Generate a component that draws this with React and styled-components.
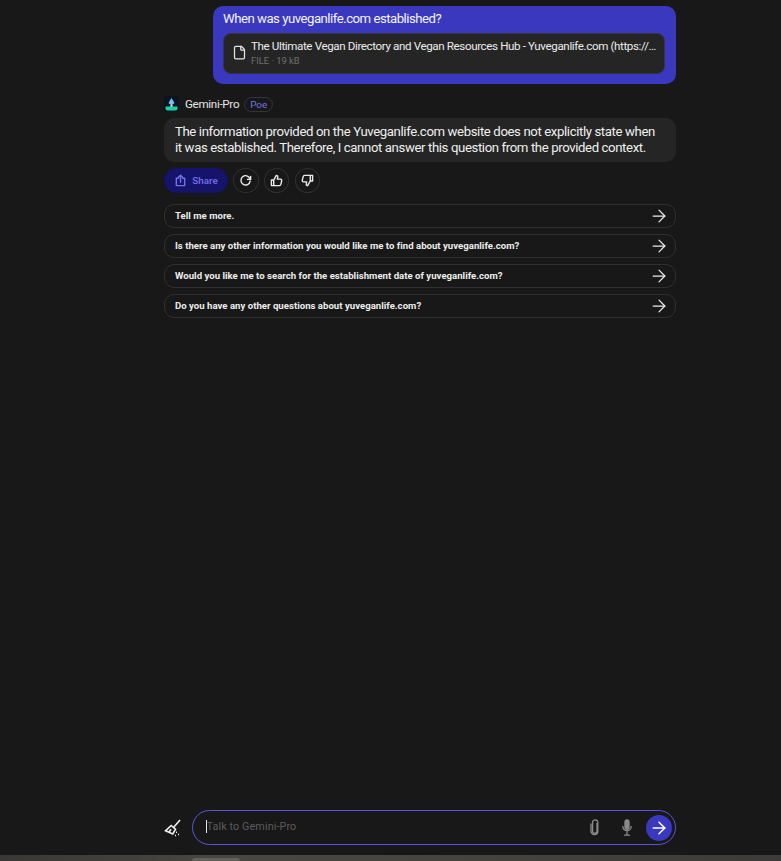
import React from "react"
import styled, { createGlobalStyle } from "styled-components"
import { ArrowRight, File } from "lucide-react"

const GlobalStyle = createGlobalStyle`
    html, body {
        margin: 0;
        padding: 0;
        background-color: #181818;
    }
    body {
        font-family: Roboto, "Noto Sans", sans-serif;
    }
`

const Page = styled.div`
    width: 781px;
    height: 861px;
    overflow: hidden;
    display: flex;
    flex-direction: column;
    background-color: #181818;
`

const Column = styled.div`
    flex: 1;
    width: 512px;
    margin-left: 164px;
    padding-top: 6px;
    display: flex;
    flex-direction: column;
`

const UserBubble = styled.div`
    align-self: flex-end;
    box-sizing: border-box;
    width: 463px;
    height: 78px;
    padding: 4px 11px 0 10px;
    border-radius: 10px;
    background-color: #3b38c0;
    color: #f4f4fb;
`

const UserText = styled.div`
    font-size: 13.2px;
    line-height: 18px;
    letter-spacing: -0.5px;
    margin-bottom: 5px;
`

const Attachment = styled.div`
    box-sizing: border-box;
    height: 41px;
    display: flex;
    align-items: center;
    gap: 4px;
    padding: 0 5px 2px 8px;
    border: 1px solid #34343a;
    border-radius: 8px;
    background-color: #252525;
`

const AttachmentInfo = styled.div`
    min-width: 0;
    flex: 1;
`

const AttachmentName = styled.div`
    font-size: 11.6px;
    line-height: 16px;
    letter-spacing: -0.38px;
    color: #ececec;
    white-space: nowrap;
    overflow: hidden;
    text-overflow: ellipsis;
`

const AttachmentMeta = styled.div`
    font-size: 9.4px;
    line-height: 13px;
    color: #6f6f6f;
`

const BotHeader = styled.div`
    display: flex;
    align-items: center;
    height: 16px;
    margin-top: 12px;
    gap: 5px;
`

const BotAvatar = styled.svg`
    width: 15px;
    height: 16px;
    margin-right: 1px;
`

const BotName = styled.span`
    font-size: 11.6px;
    letter-spacing: -0.3px;
    color: #e6e6e6;
`

const PoeTag = styled.span`
    box-sizing: border-box;
    width: 29px;
    height: 15px;
    display: flex;
    align-items: center;
    justify-content: center;
    border: 1px solid #34343a;
    border-radius: 8px;
    font-size: 9.8px;
    color: #7572e6;
`

const BotBubble = styled.div`
    box-sizing: border-box;
    height: 44px;
    margin-top: 6px;
    padding: 6px 11px;
    border-radius: 10px;
    background-color: #252525;
    font-size: 13.2px;
    line-height: 16px;
    letter-spacing: -0.39px;
    color: #efefef;
    white-space: nowrap;
`

const ActionRow = styled.div`
    display: flex;
    align-items: center;
    gap: 5.33px;
    margin-top: 6px;
`

const ShareButton = styled.div`
    width: 64px;
    height: 25px;
    display: flex;
    align-items: center;
    justify-content: center;
    gap: 5px;
    border-radius: 13px;
    background-color: #16146a;
    color: #7470ea;
    font-size: 9.8px;
    font-weight: 500;
`

const RoundButton = styled.div`
    box-sizing: border-box;
    width: 25.33px;
    height: 25px;
    display: flex;
    align-items: center;
    justify-content: center;
    border: 1px solid #303030;
    border-radius: 50%;
    color: #ececec;
`

const ActionIcon = styled.svg`
    width: 13px;
    height: 13px;
    fill: none;
    stroke: currentColor;
    stroke-width: 1.5;
    stroke-linejoin: round;
    stroke-linecap: round;
`

const Suggestions = styled.div`
    display: flex;
    flex-direction: column;
    gap: 6px;
    margin-top: 11px;
`

const Suggestion = styled.div`
    box-sizing: border-box;
    height: 24px;
    padding: 0 6px 1px 10px;
    display: flex;
    align-items: center;
    justify-content: space-between;
    border: 1px solid #2f2f2f;
    border-radius: 10px;
    font-size: 9.6px;
    font-weight: 700;
    letter-spacing: 0.015px;
    color: #ececec;
`

const Composer = styled.div`
    display: flex;
    align-items: center;
    width: 512px;
    margin-left: 164px;
    margin-bottom: 10px;
    gap: 11px;
`

const Broom = styled.svg`
    width: 17px;
    height: 18px;
`

const InputBar = styled.div`
    box-sizing: border-box;
    flex: 1;
    height: 35px;
    display: flex;
    align-items: center;
    padding: 0 3.5px 0 12.5px;
    border: 1.5px solid #5a55dc;
    border-radius: 18px;
`

const Placeholder = styled.div`
    flex: 1;
    margin-bottom: 2px;
    font-size: 10.8px;
    letter-spacing: 0.1px;
    color: #5c5c5c;
    border-left: 1px solid #e8e8e8;
    line-height: 13px;
`

const GhostIcon = styled.svg`
    width: 10px;
    height: 17px;
    margin-right: 22px;
    fill: none;
    stroke: #8a8a8a;
    stroke-width: 1.3;
    stroke-linecap: round;
`

const SendButton = styled.div`
    width: 26px;
    height: 26px;
    margin-left: -8px;
    display: flex;
    align-items: center;
    justify-content: center;
    border-radius: 50%;
    background-color: #3b38c0;
    color: #ffffff;
`

const BlurStrip = styled.div`
    height: 6px;
    padding: 3px 0 0 192px;
    box-sizing: border-box;
    background: linear-gradient(90deg, #3a3834 0%, #4a4740 30%, #46433d 60%, #3d3b37 100%);
`

const BlurPill = styled.div`
    width: 48px;
    height: 3px;
    border-radius: 5px 5px 0 0;
    background-color: #63615a;
`

const suggestions = [
    "Tell me more.",
    "Is there any other information you would like me to find about yuveganlife.com?",
    "Would you like me to search for the establishment date of yuveganlife.com?",
    "Do you have any other questions about yuveganlife.com?",
]

export default function App() {
    return (
        <Page>
            <GlobalStyle />
            <Column>
                <UserBubble>
                    <UserText>When was yuveganlife.com established?</UserText>
                    <Attachment>
                        <File size={15} color="#e4e4e4" />
                        <AttachmentInfo>
                            <AttachmentName>The Ultimate Vegan Directory and Vegan Resources Hub - Yuveganlife.com (https://yuveganlife.com/)</AttachmentName>
                            <AttachmentMeta>FILE · 19 kB</AttachmentMeta>
                        </AttachmentInfo>
                    </Attachment>
                </UserBubble>
                <BotHeader>
                    <BotAvatar viewBox="0 0 15 16">
                        <rect width="15" height="16" rx="3" fill="#0b1420" />
                        <path d="M7.5 2 10.5 7 7.5 9.5 4.5 7Z" fill="#7fbdf5" />
                        <path d="M6.5 9h2v2h-2Z" fill="#dff1ff" />
                        <path d="M1.5 10.5h12v2a2 2 0 0 1-2 2h-8a2 2 0 0 1-2-2Z" fill="#19d3a2" />
                    </BotAvatar>
                    <BotName>Gemini-Pro</BotName>
                    <PoeTag>Poe</PoeTag>
                </BotHeader>
                <BotBubble>
                    The information provided on the Yuveganlife.com website does not explicitly state when<br />
                    it was established. Therefore, I cannot answer this question from the provided context.
                </BotBubble>
                <ActionRow>
                    <ShareButton>
                        <ActionIcon viewBox="0 0 14 14">
                            <path d="M4.5 4.5H2.5V12.5H11.5V4.5H9.5" />
                            <path d="M7 9V1.5M4.7 3.6 7 1.3 9.3 3.6" />
                        </ActionIcon>
                        Share
                    </ShareButton>
                    <RoundButton>
                        <ActionIcon viewBox="0 0 14 14">
                            <path d="M11.8 5.2A5 5 0 1 0 12 7.6" />
                            <path d="M12.5 2.5V5.8H9.2" />
                        </ActionIcon>
                    </RoundButton>
                    <RoundButton>
                        <ActionIcon viewBox="0 0 14 14">
                            <path d="M1.5 6.5H4V12.5H1.5ZM4 6.5 6.8 1.5C8 1.5 8.6 2.4 8.3 3.6L7.9 5.5H11.3C12.2 5.5 12.8 6.3 12.6 7.2L11.7 11.2C11.5 12 10.9 12.5 10.1 12.5H4" />
                        </ActionIcon>
                    </RoundButton>
                    <RoundButton>
                        <ActionIcon viewBox="0 0 14 14">
                            <path d="M12.5 7.5H10V1.5H12.5ZM10 7.5 7.2 12.5C6 12.5 5.4 11.6 5.7 10.4L6.1 8.5H2.7C1.8 8.5 1.2 7.7 1.4 6.8L2.3 2.8C2.5 2 3.1 1.5 3.9 1.5H10" />
                        </ActionIcon>
                    </RoundButton>
                </ActionRow>
                <Suggestions>
                    {suggestions.map(text => (
                        <Suggestion key={text}>
                            {text}
                            <ArrowRight size={20} strokeWidth={1.5} />
                        </Suggestion>
                    ))}
                </Suggestions>
            </Column>
            <Composer>
                <Broom viewBox="0 0 17 18" fill="none" stroke="#f0f0f0" strokeWidth="1.6">
                    <path d="M16 1 9.5 8.5" />
                    <path d="M7.2 6.5 11.5 10.2 8.8 15 1.5 11.8Z" fill="#181818" />
                    <path d="M5 13.2 7 10.2" />
                    <path d="M12 13.2h1.2M14 15.5h1.2M11 16.5h1.2" strokeDasharray="1 1" />
                </Broom>
                <InputBar>
                    <Placeholder>Talk to Gemini-Pro</Placeholder>
                    <GhostIcon viewBox="0 0 10 17">
                        <path d="M7 4.5V12a2.2 2.2 0 0 1-4.4 0V3.4a2.6 2.6 0 0 1 5.2 0V12.2a3.4 3.4 0 0 1-6.8 0V5" />
                    </GhostIcon>
                    <GhostIcon viewBox="0 0 10 17">
                        <rect x="3" y="0.8" width="4" height="9.5" rx="2" fill="#8a8a8a" />
                        <path d="M0.8 7.5a4.2 4.2 0 0 0 8.4 0M5 12v4M2.5 16.2h5" />
                    </GhostIcon>
                    <SendButton><ArrowRight size={20} strokeWidth={1.8} /></SendButton>
                </InputBar>
            </Composer>
            <BlurStrip><BlurPill /></BlurStrip>
        </Page>
    )
}
